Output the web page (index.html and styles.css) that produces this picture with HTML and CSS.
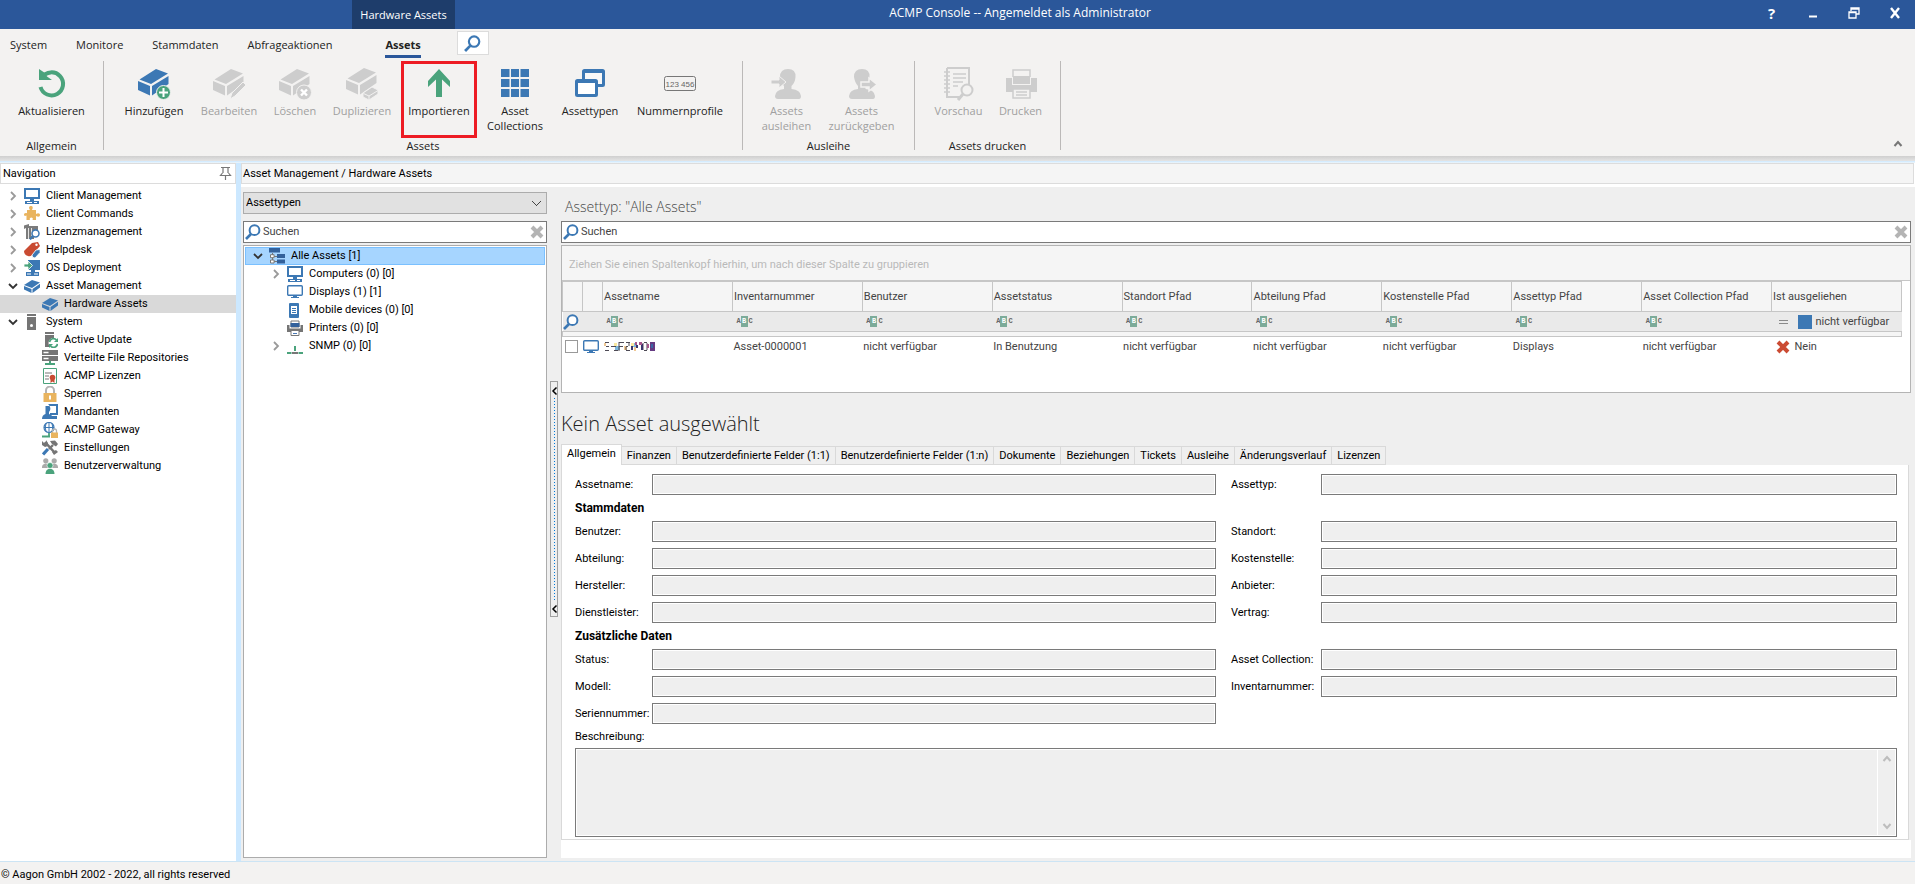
FILE: index.html
```html
<!DOCTYPE html>
<html lang="de">
<head>
<meta charset="utf-8">
<meta name="viewport" content="width=device-width, initial-scale=1">
<title>ACMP Console</title>
<link rel="stylesheet" href="styles.css">
</head>
<body>
<svg class="sprite" aria-hidden="true">
  <symbol id="search" viewBox="0 0 16 16"><circle cx="9.5" cy="6.2" r="4.9" fill="#fff" stroke="#3c78b4" stroke-width="2"/><path d="M6 10 1 15" stroke="#3c78b4" stroke-width="2.6"/></symbol>
  <symbol id="clear" viewBox="0 0 16 16"><path d="M3 3 13 13M13 3 3 13" stroke="currentColor" stroke-width="4"/></symbol>
  <symbol id="pc" viewBox="0 0 16 16"><path d="M0 0h16v11H0z" fill="#3c78b4"/><path d="M2 2h12v7H2z" fill="#fff"/><path d="M6 11h4v2h5v3H1v-3h5z" fill="#3c78b4"/><path d="M3 14.500h5M10 14.500h3" stroke="#fff"/></symbol>
  <symbol id="display" viewBox="0 0 16 16"><rect x=".7" y="1.7" width="14.6" height="9.6" rx="1" fill="#fff" stroke="#3c78b4" stroke-width="1.4"/><path d="M6 11h4v2h2v1H4v-1h2z" fill="#3c78b4"/></symbol>
  <symbol id="puzzle" viewBox="0 0 16 16"><path d="M3 4h3C4 1 5.500 0 7 0s2.500 1.500 1 4h4v4c2.500-1.500 4-.5 4 1s-1.500 2.500-4 1v4H8.500c1-2-.3-2.600-1.200-2.600S5 12.200 6 14H2.500v-4.500C.5 10.500 0 9.500 0 8.500S1 6.500 3 7.200z" fill="#e9b45f"/></symbol>
  <symbol id="license" viewBox="0 0 16 16"><path d="M0 1.500 5 0v2h9v4L10 7v8H2V4L0 5z" fill="#7b7b7b"/><path d="M4.500 4v11M7.500 4v8" stroke="#e4e4e4"/><circle cx="11.500" cy="9.500" r="3.500" fill="#fff" stroke="#3c78b4" stroke-width="1.500"/><path d="m9 12-3 3.500" stroke="#3c78b4" stroke-width="2"/></symbol>
  <symbol id="tag" viewBox="0 0 16 16"><path d="M0 9 8 1l6-1 2 4-8 9q-2 2-4 1-4-1-4-5" fill="#c94b32"/><circle cx="12.500" cy="2.800" r="1.200" fill="#fff"/><path d="m8 13 4-5 4-.5v3L11 16q-3 0-3-3" fill="#3c78b4" stroke="#fff" stroke-width=".8"/></symbol>
  <symbol id="deploy" viewBox="0 0 16 16"><path d="M4 0h12v10h-5v2h4v4H2v-4h5v-2H4z" fill="#3c78b4"/><path d="M3 14h4M10 14h4" stroke="#fff"/><path d="M0 4h4V1l4.500 4.500L4 10V7H0z" fill="#4aa37c" stroke="#fff" stroke-width=".8"/></symbol>
  <symbol id="box" viewBox="0 0 16 16"><path d="M8 2 16 4.500 8 10 0 7z" fill="#3c78b4"/><path d="M0 8l7.500 3v4L0 11.500zM8.500 11 16 5.800V9.500L8.500 15z" fill="#3c78b4"/></symbol>
  <symbol id="server" viewBox="0 0 16 16"><path d="M3 0h9v2H3zM3 3h9v13H3z" fill="#757575"/><circle cx="7.500" cy="11.500" r="1.500" fill="#fff"/></symbol>
  <symbol id="update" viewBox="0 0 16 16"><path d="M3 0h9v2H3zM3 3h9v12H3z" fill="#757575"/><circle cx="11.500" cy="11" r="5" fill="#fff"/><path d="M7.500 10a4 4 0 0 1 7-2M15.500 12a4 4 0 0 1-7 2" fill="none" stroke="#4aa37c" stroke-width="1.800"/><path d="M16 6v4h-4zM7 16v-4h4z" fill="#4aa37c"/></symbol>
  <symbol id="repo" viewBox="0 0 16 16"><path d="M0 0h16v5H0zM0 6h16v5H0z" fill="#757575"/><path d="M1.500 2.500h5M1.500 8.500h5" stroke="#fff" stroke-width="1.500"/><path d="M7 11h2v2h4v2H3v-2h4z" fill="#4aa37c"/></symbol>
  <symbol id="cert" viewBox="0 0 16 16"><path d="M1.500.5h13v15h-13z" fill="#fff" stroke="#4aa37c"/><path d="M3 5h7M3 8h4M3 11h4" stroke="#777"/><circle cx="10.500" cy="9.500" r="2.800" fill="#c94b32"/><path d="M8.500 11h4v4l-2-1.500-2 1.500z" fill="#c94b32"/></symbol>
  <symbol id="lock" viewBox="0 0 16 16"><path d="M4 8V4.500a4 4 0 0 1 8 0V8" fill="none" stroke="#b3b3b3" stroke-width="2"/><path d="M1.500 7h13v9h-13z" fill="#e9b45f"/><path d="M8 9.500v4" stroke="#fff" stroke-width="2"/></symbol>
  <symbol id="client" viewBox="0 0 16 16"><path d="M6 0h10v11H8V9h6V2H8z" fill="#3c78b4"/><path d="M7 0h9v1.500H7zM8 12h7v3H8z" fill="#3c78b4"/><path d="M3.500 2h4q2 3-.5 6v2q4 1 4 5H0q0-4 3.500-5z" fill="#3c78b4"/></symbol>
  <symbol id="gateway" viewBox="0 0 16 16"><circle cx="7" cy="5.500" r="5" fill="#fff" stroke="#3c78b4" stroke-width="1.200"/><path d="M2 5.500h10M7 .5v10M4 1.500q-1.500 4 0 8M10 1.500q1.500 4 0 8" fill="none" stroke="#3c78b4"/><path d="M7 11v3M0 14.500h8" stroke="#4aa37c" stroke-width="1.800"/><path d="M10.500 11V9a2 2 0 0 1 4 0v2" fill="none" stroke="#b3b3b3" stroke-width="1.300"/><path d="M9 10.500h7V16H9z" fill="#e9b45f"/></symbol>
  <symbol id="tools" viewBox="0 0 16 16"><path d="M3 2l10 11" stroke="#757575" stroke-width="2.600"/><path d="M0 1v4l3 2 3-1V3L4 0v3H2z" fill="#757575"/><path d="M12 15l4-3-2-2-4 2z" fill="#757575"/><path d="M11 5 7 9" stroke="#757575" stroke-width="2.400"/><path d="m8 1 5-.5L16 4l-2 2.500L10 4z" fill="#757575"/><path d="m6 9-5 5.500" stroke="#3c78b4" stroke-width="3.200"/></symbol>
  <symbol id="users" viewBox="0 0 16 16"><g fill="#aaa"><circle cx="3.800" cy="2.800" r="2.600"/><circle cx="12.200" cy="2.800" r="2.600"/><path d="M0 9q0-3 3.800-3.500Q7 6 7 9v1H0zM9 9q0-3 3.200-3.500Q16 6 16 9v1H9z"/></g><circle cx="8" cy="7.500" r="3" fill="#4aa37c" stroke="#fff" stroke-width=".6"/><path d="M3.500 16q0-4 3-5h3q3 1 3 5z" fill="#4aa37c"/></symbol>
  <symbol id="treeroot" viewBox="0 0 16 16"><path d="M3.500 5v9M4 8.500h4M4 13.500h4" stroke="#777"/><path d="M0 0h11v4.500H0zM8 6h8v4H8zM8 11.500h8v4H8z" fill="#33619b"/><path d="M1.500 6.700h3.600v3H1.500zM1.500 12h3.600v3H1.500z" fill="#fff" stroke="#777"/></symbol>
  <symbol id="mobile" viewBox="0 0 16 16"><rect x="2" y="1" width="10" height="15" rx="1" fill="#3c78b4"/><path d="M4 4h6v8H4z" fill="#fff"/><path d="M5 6.500h4M5 8.500h4M5 10.500h4" stroke="#3c78b4"/></symbol>
  <symbol id="printer" viewBox="0 0 16 16"><path d="M4 1h8v6H4z" fill="#fff" stroke="#777"/><path d="M3.500 3h9v4h-9z" fill="#33619b"/><path d="M0 5h2.500v3.500h11V5H16v7H0z" fill="#757575"/><path d="M4 10.500h8V15.500H4z" fill="#fff" stroke="#777"/><path d="M6 13.500h4" stroke="#4a79b5"/></symbol>
  <symbol id="snmp" viewBox="0 0 16 16"><path d="M8 8v5" stroke="#4aa37c" stroke-width="2"/><path d="M0 15h4.500M11.500 15H16" stroke="#4aa37c" stroke-width="2"/><path d="M5 15h6" stroke="#777" stroke-width="2"/></symbol>
  <symbol id="closed" viewBox="0 0 10 10"><path d="m3 1 4 4-4 4" fill="none" stroke="#9a9a9a" stroke-width="1.800"/></symbol>
  <symbol id="open" viewBox="0 0 10 10"><path d="m1 3 4 4 4-4" fill="none" stroke="#333" stroke-width="1.800"/></symbol>
  <symbol id="up" viewBox="0 0 10 10"><path d="m1.500 7 3.500-4 3.500 4" fill="none" stroke="currentColor" stroke-width="2"/></symbol>
  <symbol id="down" viewBox="0 0 10 10"><path d="m1.500 3 3.500 4 3.500-4" fill="none" stroke="currentColor" stroke-width="2"/></symbol>
  <symbol id="brick" viewBox="0 0 32 32"><path d="M18 1 30 5.500 13 16 1.500 11.500zM0 13l12 5v9.500L0 22zM14 18 30.500 8v8L14 27.500z" fill="currentColor"/></symbol>
  <symbol id="person" viewBox="0 0 32 32"><path d="M9 9Q9 1 17 1t7.500 8q-.5 6-4 9v3q9 1 9.500 7 0 3-2 3H7q-3 0-3-3 .5-6 9-7v-3Q10 15 9 9z" fill="currentColor"/></symbol>
</svg>

<header class="titlebar">
  <div class="context-tab">Hardware Assets</div>
  <div class="title">ACMP Console -- Angemeldet als Administrator</div>
  <div class="window-buttons">
    <button type="button" aria-label="Hilfe">?</button>
    <button type="button" aria-label="Minimieren"><svg width="12" height="12" viewBox="0 0 12 12"><path d="M2 9.500h8" stroke="#fff" stroke-width="2"/></svg></button>
    <button type="button" aria-label="Wiederherstellen"><svg width="12" height="12" viewBox="0 0 12 12"><path d="M3 4V1h8v6H8M3 2h8M1 5h7v6H1zM1 5.500h7" fill="none" stroke="#fff" stroke-width="1.300"/></svg></button>
    <button type="button" aria-label="Schließen"><svg width="12" height="12" viewBox="0 0 12 12"><path d="m2 1 8 10M10 1 2 11" stroke="#fff" stroke-width="2.400"/></svg></button>
  </div>
</header>

<nav class="menu" aria-label="Hauptmenü">
  <button type="button">System</button>
  <button type="button">Monitore</button>
  <button type="button">Stammdaten</button>
  <button type="button">Abfrageaktionen</button>
  <button type="button" class="current">Assets</button>
  <button type="button" class="menu-search" aria-label="Suche"><svg width="17" height="17"><use href="#search"/></svg></button>
</nav>

<section class="ribbon" aria-label="Menüband">
  <div class="group group-general">
    <div class="tools">
      <button type="button"><svg viewBox="0 0 32 32"><path d="M6 9.500A11.500 11.500 0 1 1 4.500 19" fill="none" stroke="#4aa37c" stroke-width="4"/><path d="M3 1v11h13l-5-3.500L9 5z" fill="#4aa37c"/></svg>Aktualisieren</button>
    </div>
    <div class="caption">Allgemein</div>
  </div>
  <span class="sep"></span>
  <div class="group">
    <div class="tools tools-assets">
      <button type="button" class="blue"><svg viewBox="0 0 32 32"><use href="#brick"/><circle cx="25.500" cy="24.500" r="7" fill="#4aa37c" stroke="#f3f2f1"/><path d="M25.500 20v9M21 24.500h9" stroke="#fff" stroke-width="2"/></svg>Hinzufügen</button>
      <button type="button" disabled><svg viewBox="0 0 32 32"><use href="#brick"/><path d="m17 31 2-6L30 14l3 3-11 11z" fill="currentColor" stroke="#f3f2f1"/></svg>Bearbeiten</button>
      <button type="button" disabled><svg viewBox="0 0 32 32"><use href="#brick"/><circle cx="25" cy="24.500" r="7.500" fill="currentColor" stroke="#f3f2f1"/><path d="m22 21.500 6 6M28 21.500l-6 6" stroke="#fff" stroke-width="2.400"/></svg>Löschen</button>
      <button type="button" disabled><svg viewBox="0 0 32 32"><use href="#brick" y="-1"/><path d="m17 25 9-6 6 3v4l-9 6-6-3z" fill="currentColor" stroke="#f3f2f1"/><path d="m17.500 25.500 5.500 2.500 9-5.500M23 28v3.500" fill="none" stroke="#f3f2f1"/></svg>Duplizieren</button>
      <button type="button" class="marked"><svg viewBox="0 0 32 32"><path d="m16 1 11 12v6l-8-7.500V29h-6V11.500L5 19v-6z" fill="#4aa37c"/></svg>Importieren</button>
      <button type="button" class="blue"><svg viewBox="0 0 32 32"><path d="M2 1h8.500v8H2zM12 1h8v8h-8zM21.500 1H30v8h-8.500zM2 11h8.500v8H2zM12 11h8v8h-8zM21.500 11H30v8h-8.500zM2 21h8.500v8H2zM12 21h8v8h-8zM21.500 21H30v8h-8.500z" fill="currentColor"/></svg>Asset<br>Collections</button>
      <button type="button" class="blue"><svg viewBox="0 0 32 32"><g fill="#f8f8f8" stroke="currentColor" stroke-width="3"><rect x="9.500" y="2.500" width="20" height="15" rx="1"/><rect x="2.500" y="12.500" width="20" height="15" rx="1" fill="#fff"/></g><path d="M2 14h21M9 4h21" stroke="currentColor" stroke-width="2"/></svg>Assettypen</button>
      <button type="button"><svg viewBox="0 0 32 32"><rect x=".5" y="8.500" width="31" height="14" rx="2" fill="#f3f2f1" stroke="#777"/><text x="16" y="19" text-anchor="middle" class="digits">123 456</text></svg>Nummernprofile</button>
    </div>
    <div class="caption">Assets</div>
  </div>
  <span class="sep"></span>
  <div class="group group-lend">
    <div class="tools tools-lend">
      <button type="button" disabled><svg viewBox="0 0 32 32"><use href="#person"/><path d="M0 12h8V8l7 6-7 6v-4H0z" fill="currentColor" stroke="#f3f2f1"/></svg>Assets<br>ausleihen</button>
      <button type="button" disabled><svg viewBox="0 0 32 32"><use href="#person" x="-1"/><path d="M15 14h8v-4l8 6.500-8 6.500v-4h-8z" fill="currentColor" stroke="#f3f2f1" stroke-width="1.500"/></svg>Assets<br>zurückgeben</button>
    </div>
    <div class="caption">Ausleihe</div>
  </div>
  <span class="sep"></span>
  <div class="group group-print">
    <div class="tools tools-print">
      <button type="button" disabled><svg viewBox="0 0 32 32"><path d="M4 0h22v17M4 0v29h13" fill="none" stroke="currentColor" stroke-width="2"/><path d="M1 4h6M1 8h6M1 12h6M1 16h6M1 20h6M1 24h6M10 6h13M10 10h13M10 14h10M10 18h5" stroke="currentColor" stroke-width="1.500"/><circle cx="24" cy="22" r="5.500" fill="#f3f2f1" stroke="currentColor" stroke-width="2"/><path d="m20 26-5 6" stroke="currentColor" stroke-width="3"/></svg>Vorschau</button>
      <button type="button" disabled><svg viewBox="0 0 32 32"><path d="M8 9V2h17v7" fill="none" stroke="currentColor" stroke-width="1.500"/><path d="M8 8h17v8H8z" fill="currentColor"/><path d="M1 10h6v7h19v-7h6v14H1z" fill="currentColor"/><path d="M8 21h17v9H8z" fill="#f3f2f1" stroke="currentColor" stroke-width="1.500"/><path d="M11 24h11M11 27h11" stroke="currentColor" stroke-width="1.500"/></svg>Drucken</button>
    </div>
    <div class="caption">Assets drucken</div>
  </div>
  <span class="sep"></span>
  <button type="button" class="collapse" aria-label="Menüband einklappen"><svg width="10" height="10"><use href="#up"/></svg></button>
</section>

<div class="workspace">
  <aside class="navigation">
    <div class="panel-head"><span>Navigation</span><button type="button" aria-label="Anheften"><svg width="11" height="13" viewBox="0 0 11 13"><path d="M1 .5h9M3 1v5M8 1v5M2.500 6 .5 8.500h10L8.500 6M5.500 8.500V13" fill="none" stroke="#777" stroke-width="1.200"/></svg></button></div>
    <ul class="tree">
      <li><a href="#"><svg class="arrow"><use href="#closed"/></svg><svg class="icon"><use href="#pc"/></svg>Client Management</a></li>
      <li><a href="#"><svg class="arrow"><use href="#closed"/></svg><svg class="icon"><use href="#puzzle"/></svg>Client Commands</a></li>
      <li><a href="#"><svg class="arrow"><use href="#closed"/></svg><svg class="icon"><use href="#license"/></svg>Lizenzmanagement</a></li>
      <li><a href="#"><svg class="arrow"><use href="#closed"/></svg><svg class="icon"><use href="#tag"/></svg>Helpdesk</a></li>
      <li><a href="#"><svg class="arrow"><use href="#closed"/></svg><svg class="icon"><use href="#deploy"/></svg>OS Deployment</a></li>
      <li><a href="#"><svg class="arrow"><use href="#open"/></svg><svg class="icon"><use href="#box"/></svg>Asset Management</a>
        <ul>
          <li><a href="#" class="selected"><svg class="icon"><use href="#box"/></svg>Hardware Assets</a></li>
        </ul>
      </li>
      <li><a href="#"><svg class="arrow"><use href="#open"/></svg><svg class="icon"><use href="#server"/></svg>System</a>
        <ul>
          <li><a href="#"><svg class="icon"><use href="#update"/></svg>Active Update</a></li>
          <li><a href="#"><svg class="icon"><use href="#repo"/></svg>Verteilte File Repositories</a></li>
          <li><a href="#"><svg class="icon"><use href="#cert"/></svg>ACMP Lizenzen</a></li>
          <li><a href="#"><svg class="icon"><use href="#lock"/></svg>Sperren</a></li>
          <li><a href="#"><svg class="icon"><use href="#client"/></svg>Mandanten</a></li>
          <li><a href="#"><svg class="icon"><use href="#gateway"/></svg>ACMP Gateway</a></li>
          <li><a href="#"><svg class="icon"><use href="#tools"/></svg>Einstellungen</a></li>
          <li><a href="#"><svg class="icon"><use href="#users"/></svg>Benutzerverwaltung</a></li>
        </ul>
      </li>
    </ul>
  </aside>

  <main class="main">
    <div class="panel-head breadcrumb">Asset Management / Hardware Assets</div>
    <div class="content">
      <section class="types">
        <select class="type-select" aria-label="Ansicht"><option>Assettypen</option></select>
        <div class="searchbox">
          <svg class="icon"><use href="#search"/></svg>
          <input type="text" placeholder="Suchen" aria-label="Assettypen suchen">
          <button type="button" aria-label="Suche leeren"><svg class="icon"><use href="#clear"/></svg></button>
        </div>
        <ul class="tree type-tree">
          <li><a href="#" class="selected"><svg class="arrow"><use href="#open"/></svg><svg class="icon"><use href="#treeroot"/></svg>Alle Assets [1]</a>
            <ul>
              <li><a href="#"><svg class="arrow"><use href="#closed"/></svg><svg class="icon"><use href="#pc"/></svg>Computers (0) [0]</a></li>
              <li><a href="#" class="leaf"><svg class="icon"><use href="#display"/></svg>Displays (1) [1]</a></li>
              <li><a href="#" class="leaf"><svg class="icon"><use href="#mobile"/></svg>Mobile devices (0) [0]</a></li>
              <li><a href="#" class="leaf"><svg class="icon"><use href="#printer"/></svg>Printers (0) [0]</a></li>
              <li><a href="#"><svg class="arrow"><use href="#closed"/></svg><svg class="icon"><use href="#snmp"/></svg>SNMP (0) [0]</a></li>
            </ul>
          </li>
        </ul>
      </section>

      <button type="button" class="splitter" aria-label="Bereich einklappen">
        <svg width="5" height="8" viewBox="0 0 5 8"><path d="M4.500.5 1 4l3.500 3.500" fill="none" stroke="#000" stroke-width="1.500"/></svg>
        <span class="dots"></span>
        <svg width="5" height="8" viewBox="0 0 5 8"><path d="M4.500.5 1 4l3.500 3.500" fill="none" stroke="#000" stroke-width="1.500"/></svg>
      </button>

      <section class="details">
        <h1>Assettyp: "Alle Assets"</h1>
        <div class="searchbox">
          <svg class="icon"><use href="#search"/></svg>
          <input type="text" placeholder="Suchen" aria-label="Assets suchen">
          <button type="button" aria-label="Suche leeren"><svg class="icon"><use href="#clear"/></svg></button>
        </div>
        <div class="grid">
          <div class="groupbox">Ziehen Sie einen Spaltenkopf hierhin, um nach dieser Spalte zu gruppieren</div>
          <table>
            <colgroup><col class="col-icon"><col class="col-icon"><col span="10"></colgroup>
            <thead>
              <tr class="heads"><th></th><th></th><th>Assetname</th><th>Inventarnummer</th><th>Benutzer</th><th>Assetstatus</th><th>Standort Pfad</th><th>Abteilung Pfad</th><th>Kostenstelle Pfad</th><th>Assettyp Pfad</th><th>Asset Collection Pfad</th><th>Ist ausgeliehen</th></tr>
              <tr class="filters">
                <td><svg class="icon"><use href="#search"/></svg></td><td></td>
                <td><span class="abc">A<b>B</b>C</span></td><td><span class="abc">A<b>B</b>C</span></td><td><span class="abc">A<b>B</b>C</span></td><td><span class="abc">A<b>B</b>C</span></td><td><span class="abc">A<b>B</b>C</span></td><td><span class="abc">A<b>B</b>C</span></td><td><span class="abc">A<b>B</b>C</span></td><td><span class="abc">A<b>B</b>C</span></td><td><span class="abc">A<b>B</b>C</span></td>
                <td><span class="cell"><i class="equals"></i><i class="swatch"></i>nicht verfügbar</span></td>
              </tr>
              <tr class="spacer"><td colspan="12"></td></tr>
            </thead>
            <tbody>
              <tr>
                <td><input type="checkbox" aria-label="Asset auswählen"></td>
                <td><svg class="icon"><use href="#display"/></svg></td>
                <td><svg class="masked" width="52" height="9" viewBox="0 0 52 9" role="img" aria-label="Unkenntlicher Name"><path d="M11 4h5v4h-5zM29 1h3v4h-3z" fill="#7fb8dd"/><path d="M0 1h2v3H0zM20 4h3v4h-3zM30 5h2v4h-2z" fill="#efc793"/><path d="M10 1h3v3h-3zM27 1h3v3h-3z" fill="#fbeaa0"/><path d="M1 .5h4M2 4.500h3M1 8.500h4M7 4.500h5M10 8.500h4M15 0v9M15 .5h5M15 4.500h4M22 .5h4M25 1v3M24 4.500h-2M22 5v3M22 8.500h4M39 1v7M40 .5h3M40 8.500h3M43 1v7" fill="none" stroke="#4d4a55"/><path d="M27 4h2v4h-2zM32 3h2v3h-2zM37 2h2v6h-2z" fill="#39356b"/><path d="M31 0h2v3h-2zM35 0h3v3h-3zM43 2h2v4h-2z" fill="#a3568b"/><path d="M46 0h5v9h-5z" fill="#653a82"/><path d="M47 2h2v4h-2z" fill="#3b67a5"/></svg></td>
                <td>Asset-0000001</td><td>nicht verfügbar</td><td>In Benutzung</td><td>nicht verfügbar</td><td>nicht verfügbar</td><td>nicht verfügbar</td><td>Displays</td><td>nicht verfügbar</td>
                <td><span class="cell cell-no"><svg class="icon"><use href="#clear"/></svg>Nein</span></td>
              </tr>
            </tbody>
          </table>
        </div>

        <h2>Kein Asset ausgewählt</h2>
        <div class="tabs" role="tablist">
          <button type="button" role="tab" aria-selected="true">Allgemein</button>
          <button type="button" role="tab">Finanzen</button>
          <button type="button" role="tab">Benutzerdefinierte Felder (1:1)</button>
          <button type="button" role="tab">Benutzerdefinierte Felder (1:n)</button>
          <button type="button" role="tab">Dokumente</button>
          <button type="button" role="tab">Beziehungen</button>
          <button type="button" role="tab">Tickets</button>
          <button type="button" role="tab">Ausleihe</button>
          <button type="button" role="tab">Änderungsverlauf</button>
          <button type="button" role="tab">Lizenzen</button>
        </div>
        <form class="form">
          <label for="f1">Assetname:</label><input type="text" id="f1" readonly>
          <label for="f2" class="second">Assettyp:</label><input type="text" id="f2" readonly>
          <h3>Stammdaten</h3>
          <label for="f3">Benutzer:</label><input type="text" id="f3" readonly>
          <label for="f4" class="second">Standort:</label><input type="text" id="f4" readonly>
          <label for="f5">Abteilung:</label><input type="text" id="f5" readonly>
          <label for="f6" class="second">Kostenstelle:</label><input type="text" id="f6" readonly>
          <label for="f7">Hersteller:</label><input type="text" id="f7" readonly>
          <label for="f8" class="second">Anbieter:</label><input type="text" id="f8" readonly>
          <label for="f9">Dienstleister:</label><input type="text" id="f9" readonly>
          <label for="f10" class="second">Vertrag:</label><input type="text" id="f10" readonly>
          <h3>Zusätzliche Daten</h3>
          <label for="f11">Status:</label><input type="text" id="f11" readonly>
          <label for="f12" class="second">Asset Collection:</label><input type="text" id="f12" readonly>
          <label for="f13">Modell:</label><input type="text" id="f13" readonly>
          <label for="f14" class="second">Inventarnummer:</label><input type="text" id="f14" readonly>
          <label for="f15">Seriennummer:</label><input type="text" id="f15" readonly>
          <label for="f16" class="wide">Beschreibung:</label>
          <div class="memo">
            <textarea id="f16" readonly></textarea>
            <div class="scroll"><svg width="10" height="10"><use href="#up"/></svg><svg width="10" height="10"><use href="#down"/></svg></div>
          </div>
        </form>
      </section>
    </div>
  </main>
</div>

<footer class="status">© Aagon GmbH 2002 - 2022, all rights reserved</footer>
</body>
</html>
```
FILE: styles.css
```css
*, *::before, *::after { box-sizing: border-box; }

:root {
  --ui: Roboto, "Liberation Sans", sans-serif;
  --ribbon: "Open Sans", "Noto Sans", sans-serif;
  --blue: #3c78b4;
  --line: #dcdcdc;
  --edge: #7a7a7a;
}

body {
  margin: 0;
  min-height: 100vh;
  display: flex;
  flex-direction: column;
  background: #f3f2f1;
  color: #000;
  font: 11px/14px var(--ui);
}

button { margin: 0; padding: 0; border: 0; background: none; color: inherit; font: inherit; }
h1, h2, h3 { margin: 0; font-weight: 300; }
ul { margin: 0; padding: 0; list-style: none; }
svg { display: block; flex: none; overflow: visible; }
.sprite { position: absolute; width: 0; height: 0; }
.icon { width: 16px; height: 16px; }

/* Title bar */
.titlebar {
  display: flex;
  height: 29px;
  padding-left: 352px;
  background: #2b579a;
  color: #fff;
  font: 12px/29px var(--ribbon);
}
.context-tab { width: 103px; background: #1e3d6b; text-align: center; font-size: 11px; }
.title { flex: 1; padding-right: 166px; text-align: center; line-height: 26px; }
.window-buttons { display: flex; padding-bottom: 3px; }
.window-buttons button { display: flex; width: 41px; align-items: center; justify-content: center; font-size: 15px; font-weight: 700; }

/* Menu */
.menu {
  display: flex;
  height: 31px;
  padding-left: 10px;
  gap: 29px;
  align-items: center;
  font: 11px/18px var(--ribbon);
  color: #222;
}
.menu .current { margin-left: 24px; padding-top: 3px; border-bottom: 3px solid #2b579a; font-weight: 700; line-height: 20px; }
.menu-search { display: flex; width: 32px; height: 24px; margin: 0 0 3px 7px; align-items: center; justify-content: center; border: 1px solid var(--line); background: #fff; }

/* Ribbon */
.ribbon { display: flex; align-items: flex-start; min-height: 96px; padding-top: 1px; font: 11px/15px var(--ribbon); color: #222; }
.group { display: flex; flex-direction: column; align-items: center; width: 638px; }
.group-general { width: 103px; }
.group-lend { width: 171px; }
.group-print { width: 145px; }
.sep { width: 1px; height: 89px; background: #bbb9b8; }
.tools { display: grid; min-height: 77px; }
.tools-assets { grid-template-columns: 74px 76px 56px 78px 76px 76px 74px 106px; padding-left: 4px; }
.tools-lend { grid-template-columns: 74px 76px; padding-right: 8px; }
.tools-print { grid-template-columns: 62px 62px; padding-left: 4px; }
.tools button { display: flex; flex-direction: column; align-items: center; border: 3px solid transparent; padding-top: 4px; white-space: nowrap; }
.tools svg { width: 32px; height: 32px; margin-bottom: 3px; }
.tools .blue svg { color: var(--blue); }
.tools button:disabled { color: #a0a0a0; }
.tools button:disabled svg { color: #cdcdcd; }
.tools .marked { border-color: #ed1c24; }
.digits { font: 8px "Liberation Sans", sans-serif; fill: #666; }
.caption { line-height: 16px; }
.collapse { align-self: flex-end; margin: 0 12px 7px auto; color: #777; }

/* Workspace */
.workspace {
  flex: 1;
  display: flex;
  padding-top: 7px;
  background: linear-gradient(#cfcfcf, #e4e4e4 5px, #cce8ff 5px, #eef6fc 7px, #cce8ff 7px);
  border-bottom: 1px solid #cce4f4;
}
.panel-head {
  display: flex;
  justify-content: space-between;
  align-items: center;
  height: 21px;
  padding: 0 4px 0 2px;
  border: 1px solid var(--line);
  background: #fff;
}
.navigation { width: 236px; margin-right: 5px; background: #fff; }
.main { flex: 1; min-width: 0; display: flex; flex-direction: column; background: #fff; }
.breadcrumb { background: #f5f5f5; margin-bottom: 3px; margin-right: 1px; padding-left: 1px; }

.tree { padding-top: 3px; }
.tree a { display: flex; height: 18px; padding-left: 8px; align-items: center; gap: 6px; color: #000; text-decoration: none; white-space: nowrap; }
.tree ul a { padding-left: 42px; }
.arrow { width: 10px; height: 10px; }
.tree .selected { background: #d9d9d9; }

/* Asset types */
.content { flex: 1; display: flex; padding: 5px 4px 3px 2px; background: #efefef; }
.types { display: flex; flex-direction: column; width: 304px; }
.type-select {
  height: 22px;
  padding: 0 8px 0 2px;
  border: 1px solid #acacac;
  border-radius: 0;
  color: #000;
  font: inherit;
  appearance: none;
  background: linear-gradient(45deg, transparent 46%, #444 46% 54%, transparent 54%) right 9px top 8px / 5px 5px no-repeat,
    linear-gradient(-45deg, transparent 46%, #444 46% 54%, transparent 54%) right 5px top 8px / 5px 5px no-repeat, #e1e1e1;
}
.searchbox {
  display: flex;
  height: 22px;
  align-items: center;
  padding: 0 1px;
  border: 1px solid var(--edge);
  background: #fff;
}
.searchbox input { flex: 1; min-width: 0; height: 18px; padding: 0 2px 2px; border: 0; outline: 0; background: none; font: inherit; }
.searchbox input::placeholder { color: #444; opacity: 1; }
.searchbox button { color: #b4b4b4; }
.types .searchbox { margin: 7px 0 2px; }
.type-tree { flex: 1; padding: 1px; border: 1px solid #acacac; background: #fff; }
.type-tree a { padding-left: 8px; }
.type-tree ul a { padding-left: 26px; }
.type-tree ul .leaf { padding-left: 42px; }
.type-tree .selected { padding-left: 7px; background: #a6d5ff; border: 1px solid #7ac0ff; }

.splitter {
  display: flex;
  flex-direction: column;
  align-items: center;
  align-self: flex-start;
  width: 8px;
  height: 236px;
  margin: 189px 3px 0;
  padding: 5px 0 3px;
  border: 1px solid #a0a0a0;
}
.dots { flex: 1; width: 1px; margin: 3px 0; background: repeating-linear-gradient(#0078d7 0 1px, transparent 1px 3px); }

/* Details */
.details { flex: 1; min-width: 0; display: flex; flex-direction: column; }
.details::after { content: ""; flex: 1; background: #fff; }
h1 { padding-left: 4px; color: #444; font: 300 14px/29px var(--ribbon); }
h2 { padding: 13px 0 2px; color: #222; font: 300 20px/36px var(--ribbon); }
.grid { min-height: 148px; margin-top: 2px; border: 1px solid #b4b4b4; background: #fff; color: #444; overflow: hidden; }
.groupbox { height: 35px; padding: 12px 7px 0; border-bottom: 1px solid #c6c6c6; background: #f5f5f5; color: #b9b9b9; }
table { width: calc(100% - 8px); border-collapse: collapse; table-layout: fixed; }
.col-icon { width: 20px; }
th, td { padding: 0; text-align: left; font-weight: 400; white-space: nowrap; }
.heads th { height: 30px; border: 1px solid #c6c6c6; background: #f5f5f5; }
.filters td { height: 20px; background: #eaeaea; }
.spacer td { height: 5px; padding: 0; border: 1px solid #c6c6c6; background: #f5f5f5; }
tbody td { height: 20px; }
td:nth-child(n+3), th:nth-child(n+3) { padding-left: 1px; }
.abc { display: flex; align-items: center; padding-left: 3px; color: #666; font: 700 7px/11px "Liberation Mono", monospace; }
.abc b { width: 7px; margin: 0 1px 0 0; background: #7cab99; color: #fff; text-align: center; }
.cell { display: flex; align-items: center; gap: 4px; }
.cell-no { padding-left: 2px; gap: 4px; }
.cell-no svg { color: #cb4b33; }
.equals { width: 9px; height: 4px; margin: 0 6px 0 6px; border: solid #8a8a8a; border-width: 1px 0; }
.swatch { width: 14px; height: 14px; background: var(--blue); }
input[type="checkbox"] { display: block; width: 13px; height: 13px; margin: 0 0 0 2px; border: 1px solid #999; background: #fff; appearance: none; }

.tabs { display: flex; align-items: flex-end; height: 21px; }
.tabs button { height: 19px; padding: 0 5px; border: 1px solid #d9d9d9; border-width: 1px 1px 1px 0; white-space: nowrap; }
.tabs [aria-selected="true"] { height: 21px; padding: 0 5px 2px; border-left-width: 1px; border-bottom: 0; background: #fff; }
.form {
  display: grid;
  grid-template-columns: 71px 564fr 93px 576fr;
  gap: 6px;
  align-items: center;
  margin-right: 2px;
  padding: 9px 11px 2px 13px;
  border: 1px solid #d9d9d9;
  border-top: 0;
  background: #fff;
}
.form label { white-space: nowrap; }
.form .second { padding-left: 9px; }
.form input, .memo { width: 100%; height: 21px; min-width: 0; margin: 0; padding: 0 3px; border: 1px solid var(--edge); background: #efefef; box-shadow: inset 0 0 0 1px #fff; font: inherit; }
.form h3 { grid-column: 1 / -1; font: 700 12px/14px var(--ui); }
.form .wide { grid-column: 1 / -1; }
.memo { grid-column: 1 / -1; display: flex; height: 89px; padding: 1px; margin-top: -2px; }
.memo textarea { flex: 1; padding: 3px; border: 0; background: none; resize: none; outline: 0; font: inherit; }
.scroll { display: flex; flex-direction: column; justify-content: space-between; align-items: center; width: 18px; padding: 4px 0; border-left: 1px solid #fff; color: #bdbdbd; }

/* Status bar */
.status { height: 22px; padding: 0 1px; line-height: 26px; }
```
